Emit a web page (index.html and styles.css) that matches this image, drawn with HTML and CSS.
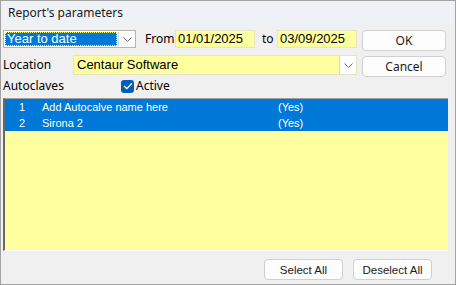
FILE: index.html
```
<!DOCTYPE html>
<html lang="en">
<head>
    <meta charset="UTF-8">
    <title>Report's parameters</title>
    <link rel="stylesheet" href="styles.css">
</head>
<body>
    <div class="window">
        <div class="titlebar">Report's parameters</div>

        <div class="content">
            <div class="top">
                <div class="fields">
                    <div class="row row-dates">
                        <div class="combo combo-period">
                            <span class="combo-value selected">Year to date</span>
                            <span class="drop-btn">
                                <svg width="9" height="5" viewBox="0 0 9 5"><path d="M0.5 0.5 L4.5 4.5 L8.5 0.5" fill="none" stroke="#6d6d6d" stroke-width="1"/></svg>
                            </span>
                        </div>
                        <span class="label label-from">From</span>
                        <div class="date-input">01/01/2025</div>
                        <span class="label label-to">to</span>
                        <div class="date-input">03/09/2025</div>
                    </div>

                    <div class="row row-location">
                        <span class="label label-location">Location</span>
                        <div class="combo combo-location">
                            <span class="combo-value">Centaur Software</span>
                            <span class="drop-btn">
                                <svg width="9" height="5" viewBox="0 0 9 5"><path d="M0.5 0.5 L4.5 4.5 L8.5 0.5" fill="none" stroke="#6d6d6d" stroke-width="1"/></svg>
                            </span>
                        </div>
                    </div>

                    <div class="row row-autoclaves">
                        <span class="label label-autoclaves">Autoclaves</span>
                        <label class="check">
                            <span class="check-box">
                                <svg width="10" height="8" viewBox="0 0 10 8"><path d="M1 4 L3.8 6.6 L9 1.2" fill="none" stroke="#fff" stroke-width="1.3"/></svg>
                            </span>
                            Active
                        </label>
                    </div>
                </div>

                <div class="side-buttons">
                    <button class="btn btn-side">OK</button>
                    <button class="btn btn-side">Cancel</button>
                </div>
            </div>

            <div class="list">
                <div class="list-row selected">
                    <span class="col-num">1</span>
                    <span class="col-name">Add Autocalve name here</span>
                    <span class="col-active">(Yes)</span>
                </div>
                <div class="list-row selected">
                    <span class="col-num">2</span>
                    <span class="col-name">Sirona 2</span>
                    <span class="col-active">(Yes)</span>
                </div>
            </div>

            <div class="bottom-buttons">
                <button class="btn btn-bottom">Select All</button>
                <button class="btn btn-bottom">Deselect All</button>
            </div>
        </div>
    </div>
</body>
</html>
```

FILE: styles.css
```
html, body {
    margin: 0;
    padding: 0;
}

body {
    font-family: "Noto Sans", "Open Sans", sans-serif;
    font-size: 12px;
    color: #000;
    background-color: #f0f0f0;
}

.window {
    box-sizing: border-box;
    width: 456px;
    height: 285px;
    border: 1px solid #a3a3a3;
    background-color: #f0f0f0;
    display: flex;
    flex-direction: column;
}

.titlebar {
    height: 24px;
    line-height: 24px;
    padding-left: 7px;
    background-color: #eef2f7;
    color: #1a1a1a;
}

.content {
    flex: 1;
    display: flex;
    flex-direction: column;
    padding: 5px 0 0 2px;
}

.top {
    display: flex;
    gap: 5px;
}

.fields {
    width: 354px;
}

.row {
    display: flex;
    align-items: center;
}

.row-dates {
    height: 18px;
}

.row-location {
    height: 20px;
    margin-top: 7px;
}

.row-autoclaves {
    height: 16px;
    margin-top: 3px;
}

.label {
    white-space: nowrap;
    line-height: 16px;
}

.label-from {
    margin-left: 9px;
    width: 30px;
}

.label-to {
    margin-left: 7px;
    width: 15px;
}

.label-location {
    width: 70px;
}

.label-autoclaves {
    width: 118px;
}

.combo {
    box-sizing: border-box;
    display: flex;
    align-items: stretch;
    height: 100%;
}

.combo-period {
    width: 133px;
    border: 1px solid #b4b4b4;
    background-color: #fff;
    padding: 1px 0 1px 1px;
}

.combo-period .combo-value {
    flex: 1;
    font-family: "Liberation Sans", Arial, sans-serif;
    font-size: 13px;
    line-height: 14px;
    padding-left: 2px;
    outline: 1px dotted #ffff80;
    outline-offset: -1px;
}

.combo-value.selected {
    background-color: #0078d7;
    color: #fff;
}

.combo-location {
    width: 284px;
    background-color: #ffffa0;
    border: 1px solid #e4e4c0;
}

.combo-location .combo-value {
    flex: 1;
    font-family: "Liberation Sans", Arial, sans-serif;
    font-size: 13px;
    line-height: 18px;
    padding-left: 3px;
}

.drop-btn {
    width: 16px;
    display: flex;
    align-items: center;
    justify-content: center;
    background-color: #fff;
    border-left: 1px solid #d6d6d6;
}

.combo-period .drop-btn {
    margin-left: 1px;
}

.date-input {
    box-sizing: border-box;
    width: 80px;
    height: 18px;
    background-color: #ffffa0;
    border: 1px solid #e6e6c4;
    font-family: "Liberation Sans", Arial, sans-serif;
    font-size: 13px;
    line-height: 16px;
    padding-left: 2px;
}

.check {
    display: flex;
    align-items: center;
    gap: 2px;
    line-height: 16px;
}

.check-box {
    width: 13px;
    height: 13px;
    border-radius: 3px;
    background-color: #005fb8;
    display: flex;
    align-items: center;
    justify-content: center;
}

.side-buttons {
    display: flex;
    flex-direction: column;
    gap: 5px;
}

.btn {
    box-sizing: border-box;
    background-color: #fdfdfd;
    border: 1px solid #d0d0d0;
    border-radius: 4px;
    font-family: "Noto Sans", "Open Sans", sans-serif;
    font-size: 12px;
    color: #1a1a1a;
    padding: 0;
}

.btn-side {
    width: 84px;
    height: 21px;
}

.list {
    box-sizing: border-box;
    width: 445px;
    height: 153px;
    margin-top: 4px;
    background-color: #ffffa0;
    border-top: 1px solid #a0a0a0;
    border-left: 2px solid #696969;
    border-bottom: 1px solid #fff;
    font-family: "Liberation Sans", Arial, sans-serif;
    font-size: 11px;
}

.list-row {
    display: flex;
    height: 16px;
    line-height: 16px;
}

.list-row.selected {
    background-color: #0078d7;
    color: #fff;
}

.col-num {
    width: 20px;
    text-align: right;
}

.col-name {
    width: 234px;
    padding-left: 17px;
}

.col-active {
    padding-left: 2px;
}

.bottom-buttons {
    display: flex;
    justify-content: flex-end;
    gap: 10px;
    margin-top: 8px;
    padding-right: 23px;
}

.btn-bottom {
    width: 79px;
    height: 21px;
    font-family: "Liberation Sans", Arial, sans-serif;
    font-size: 11.5px;
}
```
